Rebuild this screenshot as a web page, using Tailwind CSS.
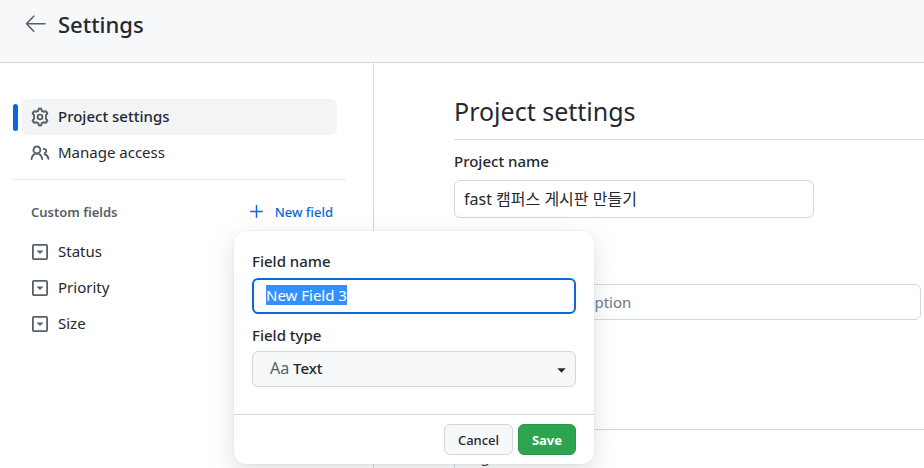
<!DOCTYPE html>
<html lang="en">
<head>
<meta charset="utf-8">
<meta name="viewport" content="width=device-width, initial-scale=1">
<title>Settings</title>
<script src="https://cdn.jsdelivr.net/npm/@tailwindcss/browser@4"></script>
</head>
<body class="h-screen overflow-hidden flex flex-col bg-white text-[#24292f] text-[15px] leading-5 font-['Noto_Sans','Noto_Sans_CJK_KR',sans-serif]">
<header class="flex items-start gap-3 bg-[#f6f8fa] border-b border-[#d0d7de] pl-6 pt-3 pb-[26px]">
  <a href="#" aria-label="Back" class="text-[#57606a] pt-px">
    <svg class="w-[22px] h-[22px]" viewBox="0 0 22 22" fill="none" stroke="currentColor" stroke-width="1.6" stroke-linecap="round" stroke-linejoin="round"><path d="M21 10.700H2.500M9.700 3.200L2.500 10.700l7.200 7.500"/></svg>
  </a>
  <h1 class="text-[22px] leading-6 font-medium">Settings</h1>
</header>
<div class="flex flex-1 min-h-0">
  <aside class="w-[374px] shrink-0 border-r border-[#d0d7de] pl-[13px] pt-9">
    <nav class="flex flex-col mr-9">
      <div class="flex items-center gap-1">
        <span class="w-[5px] h-[27px] rounded-md bg-[#0969da]"></span>
        <a href="#" class="flex flex-1 items-center gap-2 h-9 rounded-md bg-[#f3f4f6] pl-2 font-medium">
          <svg class="w-5 h-5 text-[#57606a]" viewBox="0 0 16 16" fill="none" stroke="currentColor" stroke-width="1.5" stroke-linejoin="round"><path d="M7.100 1.300Q8 1.100 8.900 1.300L9.400 3Q10.200 3.300 10.900 3.800L12.700 3.400Q13.600 4.300 13.900 5.300L12.700 6.600Q12.900 8 12.700 9.400L13.900 10.700Q13.600 11.700 12.700 12.600L10.900 12.200Q10.200 12.700 9.400 13L8.900 14.700Q8 14.900 7.100 14.700L6.600 13Q5.800 12.700 5.100 12.200L3.300 12.600Q2.400 11.700 2.100 10.700L3.300 9.400Q3.100 8 3.300 6.600L2.100 5.300Q2.400 4.300 3.300 3.400L5.100 3.800Q5.800 3.300 6.600 3Z"/><circle cx="8" cy="8" r="1.900"/></svg>
          <span class="pb-0.5">Project settings</span>
        </a>
      </div>
      <a href="#" class="flex items-center gap-2 h-9 ml-[9px] pl-2">
        <svg class="w-5 h-5 text-[#57606a]" viewBox="0 0 16 16" fill="none" stroke="currentColor" stroke-width="1.500" stroke-linecap="round"><circle cx="5.500" cy="5.500" r="2.750"/><path d="M1.200 12.900C1.700 10 3.500 8.500 5.500 8.500S9.300 10 9.800 12.900M11 4.750C12.900 4.700 13.700 6.600 12.500 7.700L11.800 8.200V9C13.400 9.500 14.500 10.900 14.800 12.700"/></svg>
        <span class="pb-0.5">Manage access</span>
      </a>
    </nav>
    <hr class="border-[#e5e7eb] mt-2 mr-[27px]">
    <div class="flex items-center justify-between mt-[22px] ml-[18px] mr-10 text-[13px] font-medium">
      <h2 class="text-[#57606a] font-semibold">Custom fields</h2>
      <button type="button" class="flex items-center gap-3 text-[#0969da]">
        <svg class="w-[13px] h-[13px] mb-0.5" viewBox="0 0 13 13" fill="none" stroke="currentColor" stroke-width="1.500" stroke-linecap="round"><path d="M6.500 .75v11.500M.75 6.500h11.500"/></svg>
        New field
      </button>
    </div>
    <ul class="mt-3 ml-[17px]">
      <li><a href="#" class="flex items-center gap-2 h-9"><svg class="w-5 h-5 text-[#57606a]" viewBox="0 0 20 20"><rect x="2.900" y="2.900" width="14.200" height="14.200" rx="1" fill="none" stroke="currentColor" stroke-width="1.800"/><path d="M6.500 8.500h7L10 12z" fill="currentColor"/></svg><span class="pb-0.5">Status</span></a></li>
      <li><a href="#" class="flex items-center gap-2 h-9"><svg class="w-5 h-5 text-[#57606a]" viewBox="0 0 20 20"><rect x="2.900" y="2.900" width="14.200" height="14.200" rx="1" fill="none" stroke="currentColor" stroke-width="1.800"/><path d="M6.500 8.500h7L10 12z" fill="currentColor"/></svg><span class="pb-0.5">Priority</span></a></li>
      <li><a href="#" class="flex items-center gap-2 h-9"><svg class="w-5 h-5 text-[#57606a]" viewBox="0 0 20 20"><rect x="2.900" y="2.900" width="14.200" height="14.200" rx="1" fill="none" stroke="currentColor" stroke-width="1.800"/><path d="M6.500 8.500h7L10 12z" fill="currentColor"/></svg><span class="pb-0.5">Size</span></a></li>
    </ul>
  </aside>
  <main class="flex flex-1 flex-col min-w-0 min-h-0 pl-20 pt-7">
    <h2 class="text-[25px] leading-10 pb-2 border-b border-[#d8dee4]">Project settings</h2>
    <label for="project-name" class="mt-[11px] font-medium">Project name</label>
    <input id="project-name" type="text" value="fast 캠퍼스 게시판 만들기" class="mt-[9px] w-[360px] h-[38px] shrink-0 rounded-md border border-[#d0d7de] px-[9px] pb-0.5 text-base">
    <label for="short-description" class="mt-[38px] font-medium">Description</label>
    <input id="short-description" type="text" placeholder="Add a short description" class="mt-2 w-[467px] max-w-full h-9 shrink-0 rounded-md border border-[#d0d7de] px-3 placeholder:text-[#6e7781]">
    <h3 class="mt-[82px] font-medium">README</h3>
    <div class="flex-1 min-h-0 mt-[7px] border-t border-l border-[#d0d7de] pt-4 pl-2"><p>Page</p></div>
  </main>
</div>
<form role="dialog" aria-label="New field" class="absolute left-[234px] top-[231px] w-[360px] rounded-xl bg-white shadow-[0_0_0_1px_rgba(140,149,159,0.06),0_8px_24px_rgba(140,149,159,0.3)]">
  <div class="px-[18px] pt-5 pb-[27px]">
    <label for="field-name" class="block font-medium">Field name</label>
    <input id="field-name" type="text" value="New Field 3" autofocus class="block mt-[7px] w-full h-9 rounded-md border-2 border-[#0969da] px-3 pb-0.5 leading-6 outline-none selection:bg-[#3390ff] selection:text-white">
    <label for="field-type" class="block mt-[11px] font-medium">Field type</label>
    <div class="grid items-center mt-[6px]">
      <select id="field-type" class="col-start-1 row-start-1 appearance-none w-full h-9 rounded-md border border-[#d0d7de] bg-[#f6f8fa] pl-10 pb-0.5 font-medium"><option>Text</option><option>Number</option><option>Date</option></select>
      <span aria-hidden="true" class="col-start-1 row-start-1 pl-[18px] pb-0.5 text-base leading-5 text-[#57606a] pointer-events-none">Aa</span>
      <svg class="col-start-1 row-start-1 justify-self-end mr-[10px] mt-0.5 w-[9px] h-[5px] pointer-events-none" viewBox="0 0 9 5"><path d="M.3 .3h8.400L4.500 4.800z" fill="#24292f"/></svg>
    </div>
  </div>
  <div class="flex justify-end gap-[5px] border-t border-[#d0d7de] px-[18px] pt-[9px] pb-[9px] text-[13px]">
    <button type="button" class="w-[69px] h-[31px] rounded-md border border-[#d0d7de] bg-[#f6f8fa] font-medium">Cancel</button>
    <button type="submit" class="w-[58px] h-[31px] rounded-md border border-[#2c974b] bg-[#2da44e] text-white font-bold">Save</button>
  </div>
</form>
<script>
const fieldName = document.getElementById('field-name');
fieldName.focus();
fieldName.select();
</script>
</body>
</html>
